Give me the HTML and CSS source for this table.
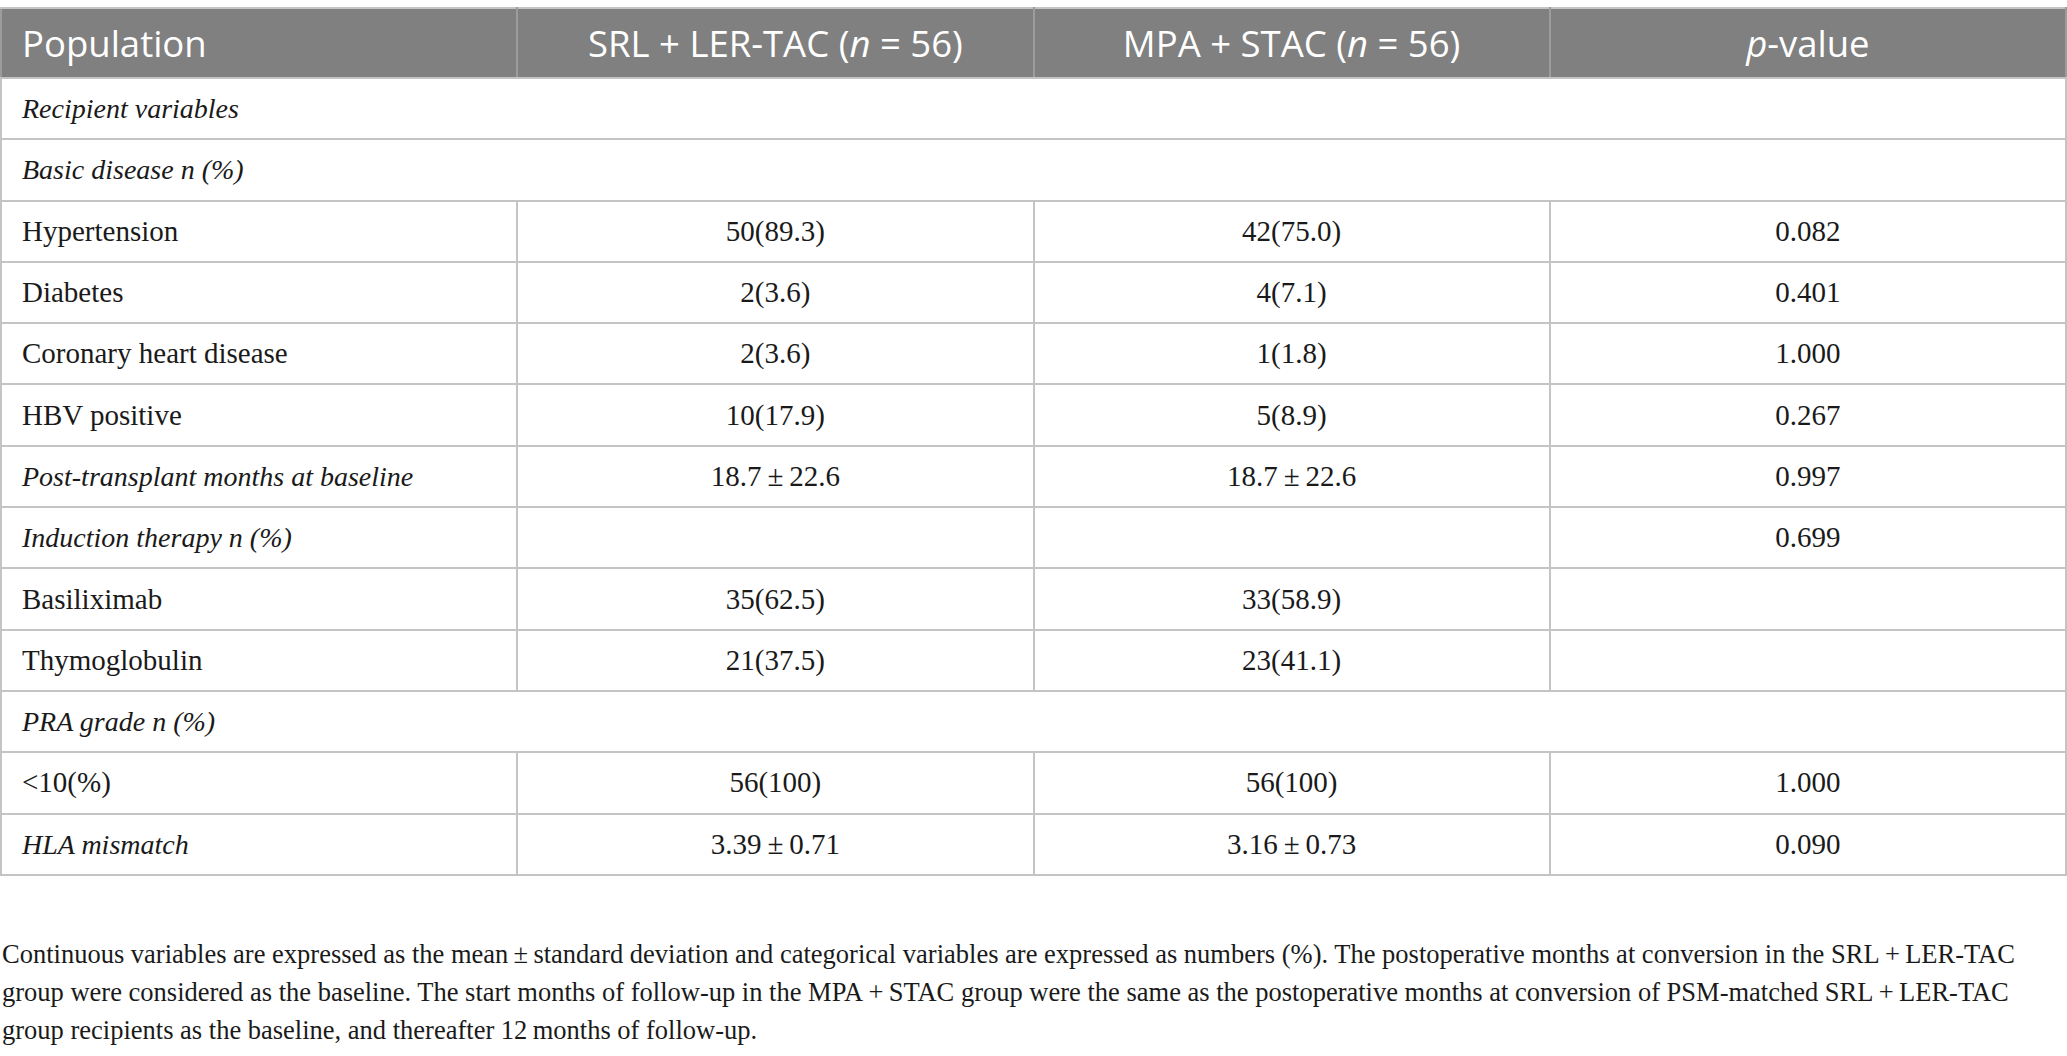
FILE: index.html
```html
<!DOCTYPE html>
<html lang="en">
<head>
    <meta charset="UTF-8">
    <meta name="viewport" content="width=device-width, initial-scale=1.0">
    <title>Population characteristics</title>
    <link rel="stylesheet" href="styles.css">
</head>
<body>
    <div class="table_wrap">
      <table class="data">
        <thead>
          <tr>
            <th class="first">Population</th>
            <th>SRL + LER-TAC (<i>n</i> = 56)</th>
            <th>MPA + STAC (<i>n</i> = 56)</th>
            <th><i>p</i>-value</th>
          </tr>
        </thead>
        <tbody>
          <tr><td colspan="4" class="group"><i>Recipient variables</i></td></tr>
          <tr><td colspan="4" class="group"><i>Basic disease n (%)</i></td></tr>
          <tr><td>Hypertension</td><td>50(89.3)</td><td>42(75.0)</td><td>0.082</td></tr>
          <tr><td>Diabetes</td><td>2(3.6)</td><td>4(7.1)</td><td>0.401</td></tr>
          <tr><td>Coronary heart disease</td><td>2(3.6)</td><td>1(1.8)</td><td>1.000</td></tr>
          <tr><td>HBV positive</td><td>10(17.9)</td><td>5(8.9)</td><td>0.267</td></tr>
          <tr><td><i>Post-transplant months at baseline</i></td><td>18.7&thinsp;±&thinsp;22.6</td><td>18.7&thinsp;±&thinsp;22.6</td><td>0.997</td></tr>
          <tr><td><i>Induction therapy n (%)</i></td><td></td><td></td><td>0.699</td></tr>
          <tr><td>Basiliximab</td><td>35(62.5)</td><td>33(58.9)</td><td></td></tr>
          <tr><td>Thymoglobulin</td><td>21(37.5)</td><td>23(41.1)</td><td></td></tr>
          <tr><td colspan="4" class="group"><i>PRA grade n (%)</i></td></tr>
          <tr><td>&lt;10(%)</td><td>56(100)</td><td>56(100)</td><td>1.000</td></tr>
          <tr><td><i>HLA mismatch</i></td><td>3.39&thinsp;±&thinsp;0.71</td><td>3.16&thinsp;±&thinsp;0.73</td><td>0.090</td></tr>
        </tbody>
      </table>
    </div>
    <p class="note">Continuous variables are expressed as the mean&thinsp;±&thinsp;standard deviation and categorical variables are expressed as numbers (%). The postoperative months at conversion in the SRL&thinsp;+&thinsp;LER-TAC<br>
    group were considered as the baseline. The start months of follow-up in the MPA&thinsp;+&thinsp;STAC group were the same as the postoperative months at conversion of PSM-matched SRL&thinsp;+&thinsp;LER-TAC<br>
    group recipients as the baseline, and thereafter 12&thinsp;months of follow-up.</p>
</body>
</html>
```

FILE: styles.css
```css
body {
  margin: 0;
  background: #fff;
  color: #1a1a1a;
  font-family: "Liberation Serif", "Times New Roman", serif;
}
.table_wrap {
  padding-top: 7px;
}
table.data {
  width: 100%;
  border-collapse: collapse;
  table-layout: fixed;
}
table.data th {
  background-color: #7f807f;
  color: #fff;
  font-family: "Open Sans", "Noto Sans", sans-serif;
  font-weight: 400;
  font-size: 36.5px;
  height: 68px;
  padding: 0 20px;
  text-align: center;
  border: 2px solid #9c9c9c;
  border-top-color: #c4c4c4;
  border-bottom-color: #c4c4c4;
}
table.data th.first {
  text-align: left;
}
table.data td {
  font-size: 29px;
  height: 59.3px;
  padding: 0 20px;
  text-align: center;
  border: 2px solid #c4c4c4;
}
table.data td i {
  font-size: 28px;
}
table.data td:first-child {
  text-align: left;
}
.note {
  margin: 59px 0 0;
  padding: 0 2px;
  font-size: 26.5px;
  line-height: 38px;
  color: #1a1a1a;
  white-space: nowrap;
}
```
